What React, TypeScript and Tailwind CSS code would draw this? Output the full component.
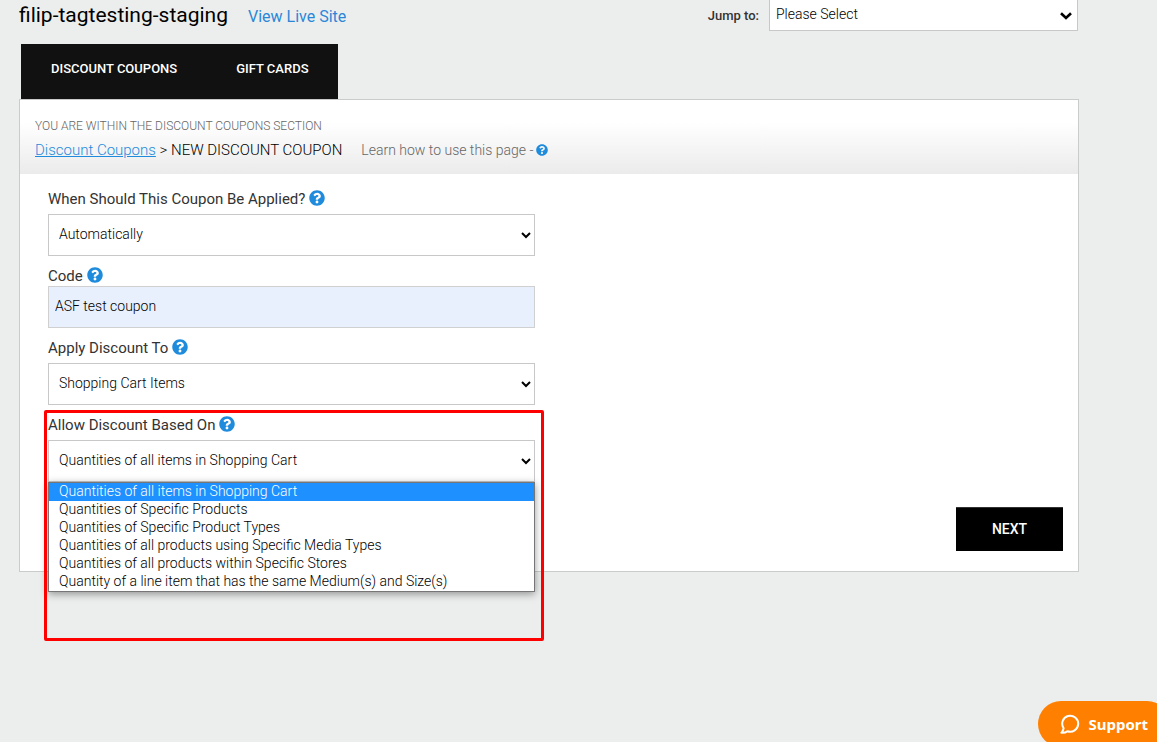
import React from "react";
import { FaQuestionCircle } from "react-icons/fa";

const APPLY_OPTIONS = ["Automatically"];
const TARGET_OPTIONS = ["Shopping Cart Items"];
const BASED_ON_OPTIONS = [
  "Quantities of all items in Shopping Cart",
  "Quantities of Specific Products",
  "Quantities of Specific Product Types",
  "Quantities of all products using Specific Media Types",
  "Quantities of all products within Specific Stores",
  "Quantity of a line item that has the same Medium(s) and Size(s)",
];

interface FieldLabelProps {
  htmlFor: string;
  text: string;
}

function FieldLabel({ htmlFor, text }: FieldLabelProps) {
  return (
    <div className="flex h-5 items-start gap-1 text-[15px] leading-5 text-[#333]">
      <label htmlFor={htmlFor}>{text}</label>
      <FaQuestionCircle className="mt-px h-4 w-4 text-[#1f8bdc]" />
    </div>
  );
}

interface SelectFieldProps {
  id: string;
  label: string;
  options: string[];
}

function SelectField({ id, label, options }: SelectFieldProps) {
  return (
    <div className="flex flex-col gap-[5px]">
      <FieldLabel htmlFor={id} text={label} />
      <select
        id={id}
        className="h-[42px] w-full border border-[#c8c8c8] bg-white px-[6px] pb-[2px] text-sm font-light text-black"
      >
        {options.map((option) => (
          <option key={option}>{option}</option>
        ))}
      </select>
    </div>
  );
}

function Header() {
  return (
    <header className="flex h-11 items-start justify-between">
      <div className="flex items-center gap-5">
        <h1 className="text-[21px] leading-[30px] text-black">filip-tagtesting-staging</h1>
        <a href="#" className="pt-1 text-base text-[#2a87d8]">
          View Live Site
        </a>
      </div>
      <div className="mr-px flex items-center gap-[10px]">
        <label htmlFor="jump" className="text-[13px] font-medium text-[#333]">
          Jump to:
        </label>
        <div className="relative">
          <select
            id="jump"
            className="block h-[31px] w-[309px] appearance-none border border-t-0 border-[#c8c8c8] bg-white px-[6px] pb-[2px] text-sm font-light text-black"
          >
            <option>Please Select</option>
          </select>
          <svg
            className="pointer-events-none absolute top-3 right-[6px] h-2 w-3"
            viewBox="0 0 12 8"
            fill="none"
            stroke="#000"
            strokeWidth={2.6}
          >
            <path d="M1 1.2L6 6L11 1.2" />
          </svg>
        </div>
      </div>
    </header>
  );
}

function Tabs() {
  return (
    <nav className="ml-[2px] flex w-fit bg-[#111] text-[13px] font-medium leading-[50px] text-white">
      <a href="#" className="h-[55px] pr-[29px] pl-[30px]">
        DISCOUNT COUPONS
      </a>
      <a href="#" className="h-[55px] pr-[29px] pl-[30px]">
        GIFT CARDS
      </a>
    </nav>
  );
}

function Breadcrumbs() {
  return (
    <div className="h-[74px] bg-linear-to-b from-white from-30% to-[#ebebeb] px-[15px] pt-4 font-light">
      <p className="text-xs leading-5 text-[#666]">YOU ARE WITHIN THE DISCOUNT COUPONS SECTION</p>
      <div className="mt-1 flex items-center gap-[19px] text-[15px] leading-5">
        <p className="text-black">
          <a href="#" className="text-[#1f8bdc] underline">
            Discount Coupons
          </a>{" "}
          &gt; NEW DISCOUNT COUPON
        </p>
        <p className="flex items-center gap-[3px] text-sm leading-5 text-[#666]">
          Learn how to use this page -
          <FaQuestionCircle className="h-3 w-3 text-[#1f8bdc]" />
        </p>
      </div>
    </div>
  );
}

// Option list of the last select, shown open
function OpenOptions() {
  return (
    <ul
      role="listbox"
      aria-label="Allow Discount Based On"
      className="absolute inset-x-0 top-full border border-[#767676] bg-white text-sm leading-4 font-light text-black shadow-[0_2px_8px_rgba(0,0,0,0.4)]"
    >
      {BASED_ON_OPTIONS.map((option, i) => (
        <li
          key={option}
          role="option"
          aria-selected={i === 0}
          className="px-[10px] pb-[2px] aria-selected:bg-[#1e90ff] aria-selected:text-white"
        >
          {option}
        </li>
      ))}
    </ul>
  );
}

function CouponForm() {
  return (
    <form className="pt-[15px] pb-5" onSubmit={(e) => e.preventDefault()}>
      <div className="ml-7 flex max-w-[487px] flex-col gap-[10px]">
        <SelectField id="when" label="When Should This Coupon Be Applied?" options={APPLY_OPTIONS} />
        <div>
          <FieldLabel htmlFor="code" text="Code" />
          <input
            id="code"
            type="text"
            defaultValue="ASF test coupon"
            className="h-[42px] w-full border border-[#d0d0d0] bg-[#e8f0fe] px-[6px] pb-[2px] text-sm font-light text-black"
          />
        </div>
        <SelectField id="target" label="Apply Discount To" options={TARGET_OPTIONS} />
        <div className="relative">
          <SelectField id="based-on" label="Allow Discount Based On" options={BASED_ON_OPTIONS} />
          <OpenOptions />
          <div className="pointer-events-none absolute -top-[5px] -right-[9px] -left-1 h-[231px] rounded-xs border-3 border-[#f00]" />
        </div>
      </div>
      <div className="mt-[25px] mr-[15px] flex justify-end">
        <button
          type="submit"
          className="h-11 w-[107px] border-t border-[#333] bg-black pb-[2px] text-sm font-medium text-white"
        >
          NEXT
        </button>
      </div>
    </form>
  );
}

function SupportButton() {
  return (
    <button
      type="button"
      className="fixed -right-[13px] -bottom-[5px] flex h-[46px] items-center gap-2 rounded-full bg-[#ff7f00] px-[22px] font-['Noto_Sans',sans-serif] text-[15px] font-bold text-white"
    >
      <svg
        className="h-5 w-5"
        viewBox="0 0 20 20"
        fill="none"
        stroke="currentColor"
        strokeWidth={2}
        strokeLinejoin="round"
      >
        <path d="M3.6 14.2A8 8 0 1 1 7.4 17.2C5.8 18.6 3.8 19 1.4 18.8C2.8 17.6 3.4 16 3.6 14.2Z" />
      </svg>
      Support
    </button>
  );
}

export default function App() {
  return (
    <div className="min-h-screen bg-[#eceeed] pr-[78px] pl-[19px] font-[Roboto,sans-serif]">
      <Header />
      <Tabs />
      <main className="border border-[#c9cccb] bg-white">
        <Breadcrumbs />
        <CouponForm />
      </main>
      <SupportButton />
    </div>
  );
}
